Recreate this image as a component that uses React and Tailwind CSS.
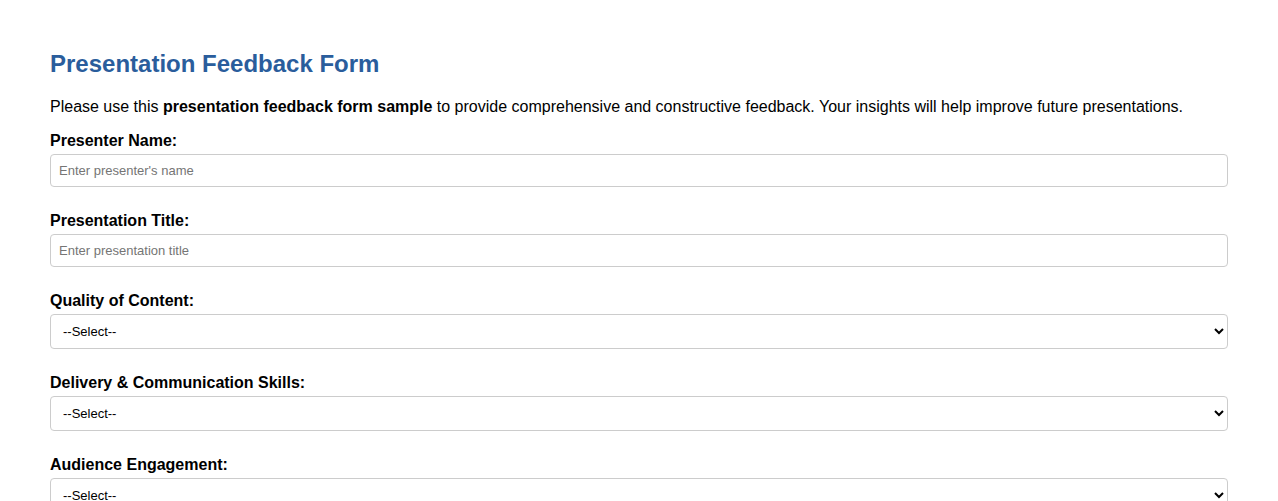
import { useState } from "react";

const options = ["--Select--", "Excellent", "Good", "Average", "Poor"];

const Field = ({ label, children }) => (
  <div className="mb-6">
    <label className="block font-bold text-[16px] leading-[18px] pt-[1px] mb-[4px] text-black">{label}</label>
    {children}
  </div>
);

const App = () => {
  const [form, setForm] = useState({
    presenter: "",
    title: "",
    content: "",
    delivery: "",
    engagement: "",
  });

  const handleChange = (e) => {
    setForm({ ...form, [e.target.name]: e.target.value });
  };

  const inputCls =
    "block w-full h-[33px] px-2 border border-[#cccccc] rounded-[4px] text-[13px] text-black placeholder:text-[#757575] bg-white outline-none";
  const selectCls =
    "block w-full h-[35px] pl-2 pr-1 border border-[#cccccc] rounded-[4px] text-[13px] text-black bg-white outline-none";

  return (
    <div className="min-h-screen bg-white px-[50px] pt-[50px] font-['Liberation_Sans',Arial,sans-serif]">
      <h2 className="text-[24px] leading-[28px] font-bold text-[#2a5d9c] mb-[20px]">Presentation Feedback Form</h2>
      <p className="text-[16px] leading-[18px] text-black mb-[15px]">
        Please use this <strong>presentation feedback form sample</strong> to provide comprehensive and constructive feedback. Your insights will help improve future presentations.
      </p>
      <form>
        <Field label="Presenter Name:">
          <input
            type="text"
            name="presenter"
            placeholder="Enter presenter's name"
            value={form.presenter}
            onChange={handleChange}
            className={inputCls}
          />
        </Field>
        <Field label="Presentation Title:">
          <input
            type="text"
            name="title"
            placeholder="Enter presentation title"
            value={form.title}
            onChange={handleChange}
            className={inputCls}
          />
        </Field>
        <Field label="Quality of Content:">
          <select name="content" value={form.content} onChange={handleChange} className={selectCls}>
            {options.map((o, i) => (
              <option key={o} value={i === 0 ? "" : o}>{o}</option>
            ))}
          </select>
        </Field>
        <Field label="Delivery & Communication Skills:">
          <select name="delivery" value={form.delivery} onChange={handleChange} className={selectCls}>
            {options.map((o, i) => (
              <option key={o} value={i === 0 ? "" : o}>{o}</option>
            ))}
          </select>
        </Field>
        <Field label="Audience Engagement:">
          <select name="engagement" value={form.engagement} onChange={handleChange} className={selectCls}>
            {options.map((o, i) => (
              <option key={o} value={i === 0 ? "" : o}>{o}</option>
            ))}
          </select>
        </Field>
      </form>
    </div>
  );
};

export default App;
